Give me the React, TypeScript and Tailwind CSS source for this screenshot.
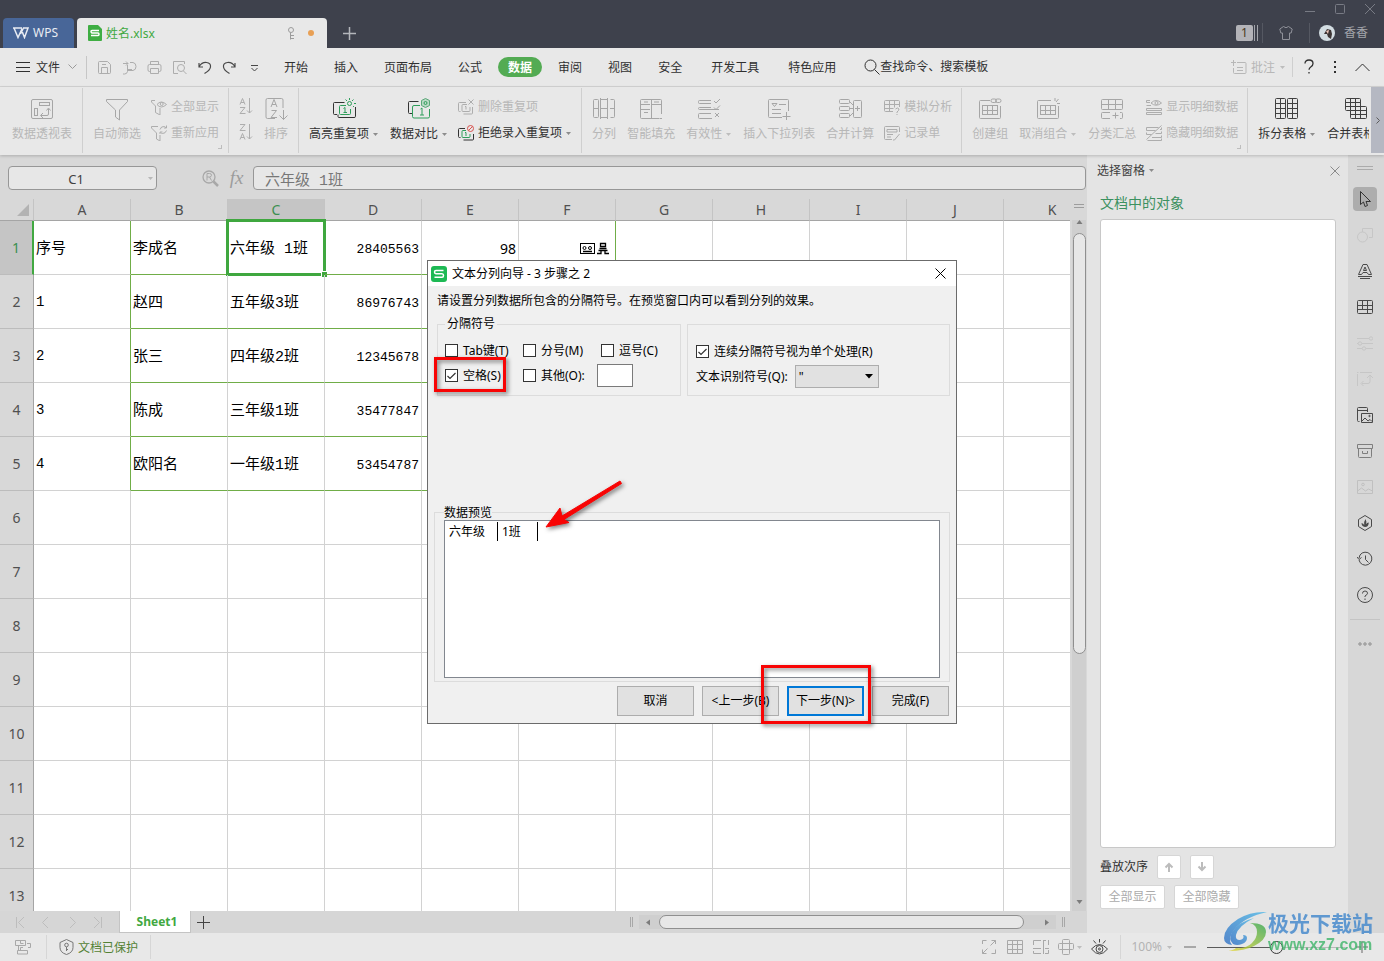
import type { ReactNode } from "react";

type IconProps = { w?: number; h?: number; className?: string; children: ReactNode };

function Icon({ w = 16, h = 16, className = "", children }: IconProps) {
  return (
    <svg
      width={w}
      height={h}
      viewBox={`0 0 ${w} ${h}`}
      fill="none"
      stroke="currentColor"
      strokeWidth="1"
      className={`shrink-0 ${className}`}
      aria-hidden="true"
    >
      {children}
    </svg>
  );
}

function Caret({ className = "text-[#8c8c8c]" }: { className?: string }) {
  return (
    <Icon w={7} h={5} className={className}>
      <path d="M1 1h5L3.500 4z" fill="currentColor" stroke="none" />
    </Icon>
  );
}

const GREEN = "#2f9e5b";

const big: Record<string, ReactNode> = {
  pivot: (
    <>
      <rect x="1.500" y="2.500" width="21" height="19" rx="1.500" />
      <rect x="9.500" y="5.500" width="10" height="3" />
      <rect x="4.500" y="11.500" width="3" height="7" />
      <path d="M11 18.500h6q1.500 0 1.500-1.500v-5M13 16l-2.500 2.500L13 21M16.500 13.500l2-2.500 2 2.500" />
    </>
  ),
  filter: <path d="M1.500 2.500h21v2l-8 8.500v10l-4-3V13l-9-8.500z" />,
  sort: (
    <>
      <path d="M11 21.500H3.500q-1.500 0-1.500-1.500V3q0-1.500 1.500-1.500h14q1.500 0 1.500 1.500v8M19.500 13v9.500M15.500 18.500l4 4 4-4" />
      <path d="M7 10l3-7.500L13 10M8 7.500h4M7.500 13.500h5l-5.500 7h6" />
    </>
  ),
  highlight: (
    <>
      <path d="M5 17.500H2.500q-1 0-1-1v-10q0-1 1-1h10M23.500 10v9.500q0 1-1.500 1H7q-1 0-1-1v-2" stroke="#333" />
      <path d="M14 8.500H8.500q-1 0-1 1v7q0 1 1 1h9q1 0 1-1V12" stroke={GREEN} />
      <path d="M11.500 11.500l1.500-1v5.500M11.500 15.500h3.500M17.500 1v2M13.500 2.500l1.500 1.500M21.500 2.500L20 4M22 6.500h2M21 9l1 1" stroke={GREEN} />
      <circle cx="17.500" cy="6.500" r="2" stroke={GREEN} />
    </>
  ),
  compare: (
    <>
      <path d="M5 16.500H2.500q-1 0-1-1v-10q0-1 1-1h9" stroke="#333" />
      <path d="M13 8.500H7q-1.500 0-1.500 1.500v9.500q0 1.500 1.500 1.500h14q1.500 0 1.500-1.500V12M13.500 12l1.500-1v7M13 18h4" stroke={GREEN} />
      <path d="M18.500 1.500l4 2v5l-4 2-4-2v-5z" stroke="#5aa878" fill="#b9d8c4" />
      <circle cx="18.500" cy="6" r="1.500" stroke={GREEN} />
    </>
  ),
  split: (
    <>
      <path d="M5.500 2.500h-3q-1 0-1 1v16q0 1 1 1h3q1 0 1-1v-16q0-1-1-1M18.500 2.500h3q1 0 1 1v16q0 1-1 1h-3M9 2.500h6M9 20.500h6M8.500 1v21M15.500 1v21M1 11.500h5M9 11.500h6M18 11.500h5" />
    </>
  ),
  fill: (
    <>
      <path d="M22.500 17V3.500q0-1-1-1h-19q-1 0-1 1v17q0 1 1 1h18M12.500 2v19M2 7.500h9M2 12.500h9M12.500 7.500h10M5 5h4M5 15.500h4M15 5h5M21 21.500h2" />
    </>
  ),
  valid: (
    <>
      <path d="M14 3.500H2.500q-1 0-1 1v1q0 1 1 1H14M14 10.500H2.500q-1 0-1 1q0 1 1 1H22M14 16.500H2.500q-1 0-1 1v3q0 1 1 1H15M17 4l2 2 4-4M17 10.500l2 2 4-4M18 16l4 4M22 16l-4 4" />
    </>
  ),
  dropdown: (
    <>
      <path d="M15 20.500H2.500q-1 0-1-1v-16q0-1 1-1h18q1 0 1 1v10.500M5 6.500h5l-2.500 3zM12 7.500h7M5 12.500h9M5 16.500h9M19.500 15v8M15.500 19.500h8" />
    </>
  ),
  merge: (
    <>
      <rect x="1.500" y="2.500" width="10" height="4" rx="1" />
      <rect x="1.500" y="9.500" width="10" height="4" rx="1" />
      <rect x="1.500" y="16.500" width="10" height="4" rx="1" />
      <rect x="15.500" y="3.500" width="8" height="17" rx="1" />
      <path d="M12 5l3 3M12 11.500h3M12 19l3-3M17 11.500h5M19.500 9v5" />
    </>
  ),
  group: (
    <>
      <path d="M12 3.500H2.500q-1 0-1 1v16q0 1 1 1h19q1 0 1-1V9" />
      <rect x="4.500" y="8.500" width="15" height="9" />
      <path d="M5 13.500h15M9.500 9v9M14.500 9v9" />
      <rect x="13" y="2" width="5.500" height="3.500" rx="1.700" />
      <rect x="17.500" y="2" width="5.500" height="3.500" rx="1.700" />
    </>
  ),
  ungroup: (
    <>
      <path d="M15 3.500H2.500q-1 0-1 1v16q0 1 1 1h19q1 0 1-1V9M19 1v3M22.500 2L20 5M24 6.500h-3" />
      <rect x="4.500" y="8.500" width="15" height="9" />
      <path d="M5 13.500h15M9.500 9v9M14.500 9v9" />
    </>
  ),
  subtotal: (
    <>
      <rect x="1.500" y="2.500" width="21" height="10" rx="1" />
      <path d="M1.500 7.500h21M8.500 2.500v10M15.500 2.500v10M10 15.500H2.500q-1 0-1 1v4q0 1 1 1H10M20 15.500h1.500q1 0 1 1v4q0 1-1 1H20M12.500 18.500h6M15.500 15.500v6" />
    </>
  ),
  splitTable: (
    <>
      <rect x="0.500" y="1.500" width="10" height="20" rx="1" />
      <rect x="12.500" y="1.500" width="10" height="20" rx="1" />
      <path d="M5.500 1.500v20M.5 6.500h10M.5 11.500h10M.5 16.500h10M17.500 1.500v20M12.500 6.500h10M12.500 11.500h10M12.500 16.500h10" />
    </>
  ),
  mergeTable: (
    <>
      <path d="M2.500 1.500h13q1 0 1 1v7h5q1 0 1 1v10q0 1-1 1h-14q-1 0-1-1v-7h-4q-1 0-1-1v-10q0-1 1-1zM6.500 1.500v12M11.500 1.500v20M16.500 9v12M1.500 5.500h15M1.500 9.500h15M6.500 13.500h16M6.500 17.500h16" />
    </>
  ),
};

const small: Record<string, ReactNode> = {
  showAll: (
    <>
      <path d="M4 1.500H.5v1.500l4 4v6.500L9 16V9M6 5.500q4-5 9.500 0-5.500 5-9.500 0z" />
      <circle cx="10.700" cy="5" r="1.500" />
    </>
  ),
  reapply: (
    <path d="M7 1.500H.5v1.500l5 5v6l3.500 2V10M9 4.500q1-3.500 4.500-3 1 .3 1.500 1.500M15.500 5.500q-1 3-4 3-1 0-2-1M15.500.5V3H13M9 9V7h2.500" />
  ),
  dedupe: (
    <path d="M2.500 12.500h-1q-1 0-1-1v-7q0-1 1-1H8M14.500 8v6q0 1-1 1h-8M9 5.500H5q-1 0-1 1v5q0 1 1 1h6q1 0 1-1V8M7 7.500h1v3M10.500.5l5 5M15.500.5l-5 5" />
  ),
  reject: (
    <>
      <path d="M2.500 12.500h-1q-1 0-1-1v-7q0-1 1-1H7M15.500 9v5q0 1-1 1h-9" stroke="#333" />
      <path d="M8 5.500H5q-1 0-1 1v5q0 1 1 1h6q1 0 1-1V9M7 7.500h1v3.500" stroke={GREEN} />
      <circle cx="12.500" cy="3.500" r="3" stroke="#d9534f" />
      <path d="M10.500 5.500l4-4" stroke="#d9534f" />
    </>
  ),
  whatif: (
    <path d="M9 12.500H1.500q-1 0-1-1v-9q0-1 1-1h13q1 0 1 1V8M.5 5.500h15M.5 9.500h9M5.500 1.500v11M10.500 1.500v7M11.500 10q2-2 3.500 0 0 1.500-2 3v1M13 15v1" />
  ),
  form: (
    <path d="M8 14.500H1.500q-1 0-1-1v-11q0-1 1-1h13q1 0 1 1V7M3 4.500h10v2.500H3zM3 9.500h6M3 12h4M15.500 9l-5 6H9" />
  ),
  showDetail: (
    <>
      <path d="M4 1.500H.5v2H4M5 6.500H.5M.5 9.500h15v2H.5zM.5 13.500h15v2H.5zM5 4q5-5 10.500 0-5.500 4.500-10.500 0z" />
      <circle cx="10.500" cy="4" r="1.500" />
    </>
  ),
  hideDetail: (
    <path d="M.5 2.500h12M.5 2.500v3h9M.5 9.500h5M.5 7.500v2M15.500.5l-15 14M14 4.500h1.500v-2M9.500 8.500h6v-2M6 12.500h9.500v-2M1.500 15.500h14v-2" />
  ),
};

function BigTool({ icon, label, caret, active }: { icon: string; label: string; caret?: boolean; active?: boolean }) {
  return (
    <button
      type="button"
      className={`flex shrink-0 flex-col items-center gap-[5px] pt-[9px] ${active ? "text-[#303030]" : "text-[#b7b7b7]"}`}
    >
      <Icon w={24} h={24} className={active ? "text-[#404040]" : "text-[#a6a6a6]"}>
        {big[icon]}
      </Icon>
      <span className="flex items-center gap-[3px] leading-4 whitespace-nowrap">
        {label}
        {caret && <Caret className={active ? "text-[#8c8c8c]" : "text-[#bdbdbd]"} />}
      </span>
    </button>
  );
}

function SmallTool({ icon, label, caret, active }: { icon: string; label: string; caret?: boolean; active?: boolean }) {
  return (
    <button
      type="button"
      className={`flex h-4 items-center gap-1 leading-4 whitespace-nowrap ${active ? "text-[#303030]" : "text-[#b7b7b7]"}`}
    >
      <Icon className={active ? "" : "text-[#adadad]"}>{small[icon]}</Icon>
      <span className="flex items-center gap-[3px]">
        {label}
        {caret && <Caret />}
      </span>
    </button>
  );
}

function Stack({ children }: { children: ReactNode }) {
  return <div className="-ml-px flex shrink-0 flex-col gap-[10px] pt-[11px]">{children}</div>;
}

function Group({ children, corner, tight }: { children: ReactNode; corner?: boolean; tight?: boolean }) {
  return (
    <div className={`relative flex shrink-0 gap-[11px] border-r border-[#cfcfcf] pl-[10px] ${tight ? "pr-[9px]" : "pr-[10px]"}`}>
      {children}
      {corner && <span className="absolute right-1.5 bottom-1 h-1 w-1 border-r border-b border-[#bdbdbd]" />}
    </div>
  );
}

function TitleBar() {
  return (
    <header className="flex h-12 shrink-0 justify-between bg-[#3e414c] text-[12px]">
      <div className="flex items-end pl-[3px]">
        <button type="button" className="mr-[3px] flex h-[30px] w-[71px] items-center gap-1 rounded-t-[4px] bg-[#486698] pl-[10px] text-[#e8ecf3]">
          <Icon w={16} h={12}>
            <path d="M0 1h9M1 1l4 9.500L8.500 3l3 7.500L15 1h-4.500l-3 6" strokeWidth="1.500" />
          </Icon>
          WPS
        </button>
        <div className="flex h-[30px] w-[250px] items-center rounded-t-[4px] bg-[#e8e8e8] pr-[13px] pl-[11px]">
          <svg width="14" height="16" viewBox="0 0 14 16" aria-hidden="true">
            <path d="M1 0h9l4 4v11q0 1-1 1H1q-1 0-1-1V1q0-1 1-1z" fill="#3fae43" />
            <path d="M11 5.500H4q-1 0-1 1T4 8h6q1 0 1 1.200t-1 1.300H3" fill="none" stroke="#fff" strokeWidth="1.500" />
          </svg>
          <span className="ml-1 flex-1 pt-0.5 text-[#41a841]">姓名.xlsx</span>
          <Icon w={8} h={13} className="mr-[13px] text-[#9c9c9c]">
            <circle cx="4" cy="3" r="2.500" />
            <path d="M3.500 5.500v7M4 8.500h3M4 11.500h3" />
          </Icon>
          <span className="h-1.5 w-1.5 rounded-full bg-[#e8a055]" />
        </div>
        <button type="button" aria-label="新建标签" className="mb-[8px] ml-[16px] text-[#b4b6bb]">
          <Icon w={13} h={13}>
            <path d="M6.500 0v13M0 6.500h13" strokeWidth="1.500" />
          </Icon>
        </button>
      </div>
      <div className="flex flex-col items-end">
        <div className="flex h-[18px] items-center gap-5 pr-[9px] text-[#787b84]">
          <button type="button" aria-label="最小化">
            <Icon w={10} h={10}>
              <path d="M0 7.500h10" />
            </Icon>
          </button>
          <button type="button" aria-label="最大化">
            <Icon w={10} h={10}>
              <rect x="0.500" y="0.500" width="9" height="9" rx="1" />
            </Icon>
          </button>
          <button type="button" aria-label="关闭">
            <Icon w={10} h={10}>
              <path d="M0 0l10 10M10 0L0 10" />
            </Icon>
          </button>
        </div>
        <div className="flex h-[30px] items-center pr-4 text-[#a3a5ab]">
          <span className="flex h-4 w-[17px] items-center justify-center rounded-[2px] bg-[#b3b3b8] text-[#4b3a20]">1</span>
          <span className="ml-px h-4 w-1 border-x border-[#a3a5ab]" />
          <span className="ml-1 h-5 w-px bg-[#555862]" />
          <Icon w={14} h={14} className="mx-4 text-[#8f9199]">
            <path d="M4.500.5L.8 3l1 4H3.500v6.500h7V7h1.700l1-4L9.500.5q-2.500 2.500-5 0z" />
          </Icon>
          <span className="h-5 w-px bg-[#555862]" />
          <svg width="16" height="16" viewBox="0 0 16 16" className="mx-[9px]" aria-hidden="true">
            <circle cx="8" cy="8" r="8" fill="#d3dde2" />
            <path d="M5 9l3-5 4 1 1 4-1 5-3-2-1-3z" fill="#3c3535" />
            <path d="M7 6l3-1-1 4z" fill="#eec9bd" />
          </svg>
          <span>香香</span>
        </div>
      </div>
    </header>
  );
}

const quick: { label: string; dark?: boolean; d: ReactNode }[] = [
  { label: "保存", d: <path d="M2.500 1.500h8l3 3v8q0 1-1 1h-10q-1 0-1-1v-10q0-1 1-1zM4.500 13V7.500h6V13M5 4.500h4" /> },
  { label: "输出", d: <path d="M1 3.500h5M4 1.500l2 2-2 2M8 2.500h3q3 .5 3 4t-3 4H5.500M5.500 5v6.500q-.5 2.500-3 2.500H1M5 9.500h5" /> },
  { label: "打印", d: <path d="M3.500 4.500v-3h8v3M3.500 11.500h-1q-1.500 0-1.500-1.500V6q0-1.500 1.500-1.500h10Q14 4.500 14 6v4q0 1.500-1.500 1.500h-1M3.500 8.500h8v5h-8z" /> },
  { label: "预览", d: <><path d="M6 13.500H1.500v-12h11V4M11.500 11l3 3" /><circle cx="9" cy="8" r="3.500" /></> },
  { label: "撤销", dark: true, d: <path d="M2 3v4h4M2.200 6.500Q5 2 9.500 2.500t4 4.500q-.5 3.500-6 6.500" strokeWidth="1.200" /> },
  { label: "恢复", dark: true, d: <path d="M13 3v4H9M12.800 6.500Q10 2 5.500 2.500t-4 4.500q.5 3.500 6 6.500" strokeWidth="1.200" /> },
  { label: "更多", dark: true, d: <path d="M4 5.500h7M4.500 8l3 3 3-3" /> },
];

const tabs = [
  ["开始", ""],
  ["插入", ""],
  ["页面布局", ""],
  ["公式", ""],
  ["数据", "active"],
  ["审阅", ""],
  ["视图", ""],
  ["安全", ""],
  ["开发工具", "wide"],
  ["特色应用", "wide"],
];

function MenuBar() {
  return (
    <nav className="flex h-[39px] shrink-0 items-center border-b border-[#d4d4d4] bg-[#e8e8e8] text-[12px] whitespace-nowrap text-[#303030]">
      <button type="button" className="flex items-center pl-4">
        <Icon w={14} h={11}>
          <path d="M0 .5h14M0 5.500h14M0 9.500h14" />
        </Icon>
        <span className="mr-2 ml-1.5 pt-px">文件</span>
        <Icon w={9} h={6} className="text-[#9a9a9a]">
          <path d="M.5.5l4 4 4-4" />
        </Icon>
      </button>
      <div className="ml-[9px] flex items-center gap-[10px] border-l border-[#c6c6c6] py-1 pl-[10px]">
        {quick.map((q) => (
          <button key={q.label} type="button" aria-label={q.label} className={q.dark ? "text-[#484848]" : "text-[#adadad]"}>
            <Icon w={15} h={15}>{q.d}</Icon>
          </button>
        ))}
      </div>
      <div className="ml-3 flex items-center gap-1.5">
        {tabs.map(([name, kind]) => (
          <button
            key={name}
            type="button"
            className={
              kind === "active"
                ? "h-5 rounded-full bg-[#53ab53] px-[10px] pt-px font-bold text-white"
                : kind === "wide"
                  ? "ml-[3px] h-5 px-[10px] pt-px"
                  : "h-5 px-[10px] pt-px"
            }
          >
            {name}
          </button>
        ))}
      </div>
      <button type="button" className="ml-[18px] flex items-center">
        <Icon w={16} h={16}>
          <circle cx="6.500" cy="6.500" r="5.500" />
          <path d="M10.500 10.500l5 5" />
        </Icon>
        查找命令、搜索模板
      </button>
      <div className="ml-auto flex items-center pr-[14px]">
        <button type="button" className="flex items-center gap-1 text-[#b7b7b7]">
          <Icon w={16} h={15}>
            <path d="M6 2.500h8q1 0 1 1v9q0 1-1 1H3.500q-1 0-1-1V8M2.500 0v6M0 2.500h5M6 7.500h6M6 10.500h6" />
          </Icon>
          <span className="pt-px">批注</span>
          <Caret className="text-[#bdbdbd]" />
        </button>
        <span className="mx-[6px] h-5 w-px bg-[#cfcfcf]" />
        <button type="button" aria-label="帮助" className="w-5">
          <Icon w={20} h={16}>
            <path d="M6 4.500q0-3.500 4-3.500t4 3.500q0 2-2 3.300t-2 3M10 13v1.500" strokeWidth="1.300" />
          </Icon>
        </button>
        <button type="button" aria-label="更多选项" className="mr-4 ml-3 w-2">
          <Icon w={8} h={14}>
            <path d="M4 1v2M4 6v2M4 11v2" strokeWidth="2" />
          </Icon>
        </button>
        <button type="button" aria-label="收起功能区">
          <Icon w={15} h={9}>
            <path d="M.5 8l7-7 7 7" />
          </Icon>
        </button>
      </div>
    </nav>
  );
}

function Ribbon() {
  return (
    <section className="z-10 flex h-[68px] shrink-0 bg-[#e8e8e8] text-[12px] shadow-[0_1px_3px_rgba(0,0,0,0.2)]" aria-label="数据">
      <div className="flex min-w-0 flex-1 overflow-hidden pt-px pb-0.5 pl-0.5">
        <Group>
          <BigTool icon="pivot" label="数据透视表" />
        </Group>
        <Group corner tight>
          <BigTool icon="filter" label="自动筛选" />
          <Stack>
            <SmallTool icon="showAll" label="全部显示" />
            <SmallTool icon="reapply" label="重新应用" />
          </Stack>
        </Group>
        <Group>
          <div className="flex flex-col gap-[10px] pt-[10px] text-[#adadad]">
            <button type="button" aria-label="升序">
              <Icon w={14} h={16}>
                <path d="M1 6.500L3.500.5 6 6.500M2 4.500h3M1 9.500h5L1 15.500h5.500M10.500 0v15M8 12.500l2.500 2.500 2.500-2.500" />
              </Icon>
            </button>
            <button type="button" aria-label="降序">
              <Icon w={14} h={16}>
                <path d="M1 .5h5L1 6.500h5.500M1 15.500l2.500-6 2.500 6M2 13.500h3M10.500 0v15M8 12.500l2.500 2.500 2.500-2.500" />
              </Icon>
            </button>
          </div>
          <BigTool icon="sort" label="排序" />
        </Group>
        <Group tight>
          <BigTool icon="highlight" label="高亮重复项" caret active />
          <BigTool icon="compare" label="数据对比" caret active />
          <Stack>
            <SmallTool icon="dedupe" label="删除重复项" />
            <SmallTool icon="reject" label="拒绝录入重复项" caret active />
          </Stack>
        </Group>
        <Group tight>
          <BigTool icon="split" label="分列" />
          <BigTool icon="fill" label="智能填充" />
          <BigTool icon="valid" label="有效性" caret />
          <BigTool icon="dropdown" label="插入下拉列表" />
          <BigTool icon="merge" label="合并计算" />
          <Stack>
            <SmallTool icon="whatif" label="模拟分析" />
            <SmallTool icon="form" label="记录单" />
          </Stack>
        </Group>
        <Group corner tight>
          <BigTool icon="group" label="创建组" />
          <BigTool icon="ungroup" label="取消组合" caret />
          <BigTool icon="subtotal" label="分类汇总" />
          <Stack>
            <SmallTool icon="showDetail" label="显示明细数据" />
            <SmallTool icon="hideDetail" label="隐藏明细数据" />
          </Stack>
        </Group>
        <Group>
          <BigTool icon="splitTable" label="拆分表格" caret active />
          <BigTool icon="mergeTable" label="合并表格" caret active />
        </Group>
      </div>
      <button type="button" aria-label="向右滚动" className="mb-0.5 ml-0.5 flex w-[13px] items-center justify-center bg-[#b5b8c2] text-[#5c5c5c]">
        <Icon w={4} h={7}>
          <path d="M.5.5l3 3-3 3" />
        </Icon>
      </button>
    </section>
  );
}

const SHEET_TEXT = "font-['Liberation_Mono','Noto_Sans_CJK_SC',monospace]";

function FormulaBar() {
  return (
    <div className="flex h-11 shrink-0 items-center pt-0.5 pr-px pl-2">
      <div className="flex h-6 w-[149px] items-center rounded-[4px] border border-[#979797] bg-[#e7e7e7] pr-0.5">
        <input aria-label="名称框" defaultValue="C1" className="h-5 min-w-0 flex-1 bg-transparent pt-0.5 pr-1 text-center text-[13px] text-[#404040] outline-none" />
        <Caret className="text-[#b8b8b8]" />
      </div>
      <Icon w={17} h={17} className="ml-[45px] text-[#a8a8a8]">
        <circle cx="7" cy="7" r="6" strokeWidth="1.300" />
        <path d="M5 10.500v-7h2.500q2 0 2 1.700T7.500 7H5M7.500 7l2 3.500" />
        <path d="M11.500 11.500l4.500 4.500" strokeWidth="2.500" />
      </Icon>
      <span className="mr-2 ml-[9px] w-[17px] text-center font-['Liberation_Serif',serif] text-[19px] leading-6 text-[#9c9c9c] italic">fx</span>
      <input
        aria-label="编辑栏"
        defaultValue="六年级 1班"
        className={`h-6 min-w-0 flex-1 rounded-[4px] border border-[#979797] bg-[#e7e7e7] px-[11px] pt-0.5 text-[15px] text-[#777] outline-none ${SHEET_TEXT}`}
      />
    </div>
  );
}

const columns = ["A", "B", "C", "D", "E", "F", "G", "H", "I", "J", "K"];
const data: string[][] = [
  ["序号", "李成名", "六年级 1班", "28405563", "98"],
  ["1", "赵四", "五年级3班", "86976743", ""],
  ["2", "张三", "四年级2班", "12345678", ""],
  ["3", "陈成", "三年级1班", "35477847", ""],
  ["4", "欧阳名", "一年级1班", "53454787", ""],
];
const rows = Array.from({ length: 13 }, (_, i) => i);

function cellBorder(r: number, c: number) {
  const inside = r < 5;
  const right = inside && (c === 0 || c === 5) ? "border-r-[#70ad47]" : "border-r-[#d2d2d2]";
  const bottom = inside && c >= 1 && c <= 5 ? "border-b-[#70ad47]" : "border-b-[#d2d2d2]";
  return `${right} ${bottom}`;
}

function cellFace(r: number, c: number) {
  if (c === 3) return `pt-1 text-right text-[13px] ${SHEET_TEXT}`;
  if (c === 4) return "pt-0.5 text-right text-[14px]";
  if (c === 0 && r > 0) return `pt-0.5 text-left text-[14px] ${SHEET_TEXT}`;
  return `pt-1.5 text-left text-[15px] ${SHEET_TEXT}`;
}

function Sheet() {
  return (
    <div className="flex min-h-0 flex-1">
      <div className="min-w-0 flex-1 overflow-hidden bg-white">
        <table className="w-[1101px] table-fixed border-separate border-spacing-0">
          <colgroup>
            <col className="w-[34px]" />
            {columns.map((c) => (
              <col key={c} className="w-[97px]" />
            ))}
          </colgroup>
          <thead>
            <tr>
              <th aria-label="全选" className="h-[22px] border-r border-b border-r-[#c4c4c4] border-b-[#a5a5a5] bg-[#d8d8d8] p-0">
                <Icon w={12} h={12} className="ml-auto mr-1 text-[#b3b3b3]">
                  <path d="M12 0v12H0z" fill="currentColor" stroke="none" />
                </Icon>
              </th>
              {columns.map((c) => (
                <th
                  key={c}
                  className={`h-[22px] border-r border-b border-r-[#c4c4c4] border-b-[#a5a5a5] p-0 text-[14px] leading-5 font-normal ${
                    c === "C" ? "bg-[#c5c5c5] text-[#3b8f50]" : "bg-[#d8d8d8] text-[#505050]"
                  }`}
                >
                  {c}
                </th>
              ))}
            </tr>
          </thead>
          <tbody>
            {rows.map((r) => (
              <tr key={r}>
                <th
                  className={`h-[54px] border-b border-b-[#bcbcbc] p-0 text-[14px] font-normal ${
                    r === 0 ? "border-r-2 border-r-[#41a841] bg-[#c5c5c5] text-[#3b8f50]" : "border-r border-r-[#a5a5a5] bg-[#d8d8d8] text-[#505050]"
                  }`}
                >
                  {r + 1}
                </th>
                {columns.map((name, c) => (
                  <td key={name} className={`relative h-[54px] border-r border-b px-0.5 pb-0 whitespace-pre text-black ${cellFace(r, c)} ${cellBorder(r, c)}`}>
                    {data[r]?.[c] ?? ""}
                    {r === 0 && c === 5 && (
                      <Icon w={30} h={13} className="mr-[3px] -mt-1 ml-auto">
                        <rect x="0.500" y="1.500" width="14" height="10" />
                        <circle cx="4.500" cy="6" r="1.500" />
                        <circle cx="10" cy="6" r="1.500" />
                        <path d="M3 9.500h9M20.500 1.500h5v3h-5zM19.500 6.500h7M18.500 8.500h9M17 11.500h4v-3h4v3h4" strokeWidth="1.300" />
                      </Icon>
                    )}
                    {r === 0 && c === 2 && (
                      <>
                        <span className="absolute -top-0.5 -right-0.5 -bottom-0.5 -left-0.5 border-[3px] border-[#3fa73f]" />
                        <span className="absolute -right-1 -bottom-1 h-[7px] w-[7px] border border-white bg-[#3fa73f]" />
                      </>
                    )}
                  </td>
                ))}
              </tr>
            ))}
          </tbody>
        </table>
      </div>
      <div className="flex w-[17px] shrink-0 flex-col pr-px pl-[2px]">
        <span className="mx-[2px] mt-[5px] mb-[12px] h-[4px] shrink-0 border-y border-[#9d9d9d]" />
        <div className="flex min-h-0 flex-1 flex-col items-center bg-[#cfcfcf] text-[#7c7c7c]">
          <Icon w={7} h={13}>
            <path d="M.5 4L3.500 0l3 4z" fill="currentColor" stroke="none" />
          </Icon>
          <div className="h-[421px] w-[13px] rounded-full border border-[#8f8f8f] bg-[#e7e7e7]" />
          <Icon w={7} h={12} className="mt-auto">
            <path d="M.5 1L3.500 5l3-4z" fill="currentColor" stroke="none" />
          </Icon>
        </div>
      </div>
    </div>
  );
}

function SheetBar() {
  return (
    <div className="flex h-[22px] shrink-0 items-center bg-[#d6d6d6]">
      <div className="flex w-[119px] items-center gap-4 pl-[15px] text-[#bdbdbd]">
        {["M1.500 0v11M9 0L3.500 5.500 9 11", "M7 0L1.500 5.500 7 11", "M3 0l5.500 5.500L3 11", "M1 0l5.500 5.500L1 11M8.500 0v11"].map((d, i) => (
          <button key={d} type="button" aria-label={["第一个", "上一个", "下一个", "最后一个"][i]}>
            <Icon w={10} h={11}>
              <path d={d} />
            </Icon>
          </button>
        ))}
      </div>
      <button type="button" className="h-[22px] w-[72px] border-x border-b border-[#c4c4c4] bg-white pt-px pl-1 text-[12px] font-bold text-[#41a841]">
        Sheet1
      </button>
      <button type="button" aria-label="新建工作表" className="ml-1.5 text-[#444]">
        <Icon w={13} h={13}>
          <path d="M6.500 0v13M0 6.500h13" />
        </Icon>
      </button>
      <div className="mr-[22px] ml-auto flex w-[435px] items-center gap-1.5">
        <span className="h-[10px] w-[3px] border-x border-[#a8a8a8]" />
        <div className="flex h-[14px] w-[417px] items-center bg-[#cfcfcf] text-[#7c7c7c]">
          <Icon w={20} h={7}>
            <path d="M11 .5v6l-4-3z" fill="currentColor" stroke="none" />
          </Icon>
          <div className="h-[14px] w-[365px] rounded-full border border-[#8f8f8f] bg-[#e7e7e7]" />
          <Icon w={30} h={7}>
            <path d="M21 .5v6l4-3z" fill="currentColor" stroke="none" />
          </Icon>
        </div>
        <span className="h-[10px] w-[3px] border-x border-[#a8a8a8]" />
      </div>
    </div>
  );
}

function SelectionPane() {
  return (
    <aside className="flex w-[261px] shrink-0 flex-col bg-[#e4e4e4] pr-3 pb-6 pl-[13px] text-[12px] leading-4">
      <div className="-ml-[3px] flex h-[31px] items-center justify-between">
        <button type="button" className="flex items-center gap-[3px] text-[#404040]">
          选择窗格
          <Caret />
        </button>
        <button type="button" aria-label="关闭窗格" className="-mr-1 text-[#8a8a8a]">
          <Icon w={10} h={10}>
            <path d="M.5.500l9 9M9.500.500l-9 9" />
          </Icon>
        </button>
      </div>
      <h2 className="flex h-[33px] items-center pt-px text-[14px] leading-5 text-[#3c9160]">文档中的对象</h2>
      <div className="min-h-0 flex-1 rounded-[3px] border border-[#c8c8c8] bg-white" />
      <div className="mt-[7px] flex items-center text-[#303030]">
        叠放次序
        <button type="button" aria-label="上移" className="ml-[9px] flex h-6 w-6 items-center justify-center rounded-[2px] border border-[#d6d6d6] bg-white text-[#bcbcbc]">
          <Icon w={10} h={10}>
            <path d="M5 10V2M1.500 5.500L5 2l3.500 3.500" strokeWidth="2" />
          </Icon>
        </button>
        <button type="button" aria-label="下移" className="ml-[9px] flex h-6 w-6 items-center justify-center rounded-[2px] border border-[#d6d6d6] bg-white text-[#bcbcbc]">
          <Icon w={10} h={10}>
            <path d="M5 0v8M1.500 4.500L5 8l3.500-3.500" strokeWidth="2" />
          </Icon>
        </button>
      </div>
      <div className="mt-1.5 flex gap-[9px] text-[#ababab]">
        <button type="button" className="h-6 w-[65px] rounded-[2px] border border-[#d6d6d6] bg-white">全部显示</button>
        <button type="button" className="h-6 w-[65px] rounded-[2px] border border-[#d6d6d6] bg-white">全部隐藏</button>
      </div>
    </aside>
  );
}

const rail: { label: string; tone: string; d: ReactNode }[] = [
  { label: "选择", tone: "bg-[#adadad] text-[#333]", d: <path d="M3.500.5v13l3-2.500 1.500 4.500 2.500-1L9 10.500h4.500z" /> },
  { label: "形状", tone: "text-[#c6c6c6]", d: <><path d="M5.500 5V1.500h10v9H12" /><circle cx="5.500" cy="10" r="5" /></> },
  { label: "艺术字", tone: "text-[#4a4a4a]", d: <path d="M1.500 11.500L6 1.500h4l4.500 10h-3L10 9.500H6l-1.500 2zM6.500 7.500h3L8 4zM1 13.500h14M3 15.500h10" /> },
  { label: "表格", tone: "text-[#4a4a4a]", d: <path d="M1.500 1.500h13q1 0 1 1v11q0 1-1 1h-13q-1 0-1-1v-11q0-1 1-1zM.5 6.500h15M.5 10.500h15M5.500 1.500v9M10.500 1.500v13" /> },
  { label: "属性", tone: "text-[#c6c6c6]", d: <><path d="M0 3.500h12M0 8.500h1M5 8.500h11M0 13.500h5M9 13.500h7" /><circle cx="14" cy="3.500" r="1.700" /><circle cx="3" cy="8.500" r="1.700" /><circle cx="7" cy="13.500" r="1.700" /></> },
  { label: "透视表", tone: "text-[#c6c6c6]", d: <path d="M.5 3v12M3 1.500h12M0 1.500h1.500M5 12.500h6q2 0 2-2V5M6.500 10L4 12.500 6.500 15M10 7l3-3 3 3" /> },
  { label: "图片库", tone: "text-[#4a4a4a]", d: <><path d="M2.500 14.500h-1q-1 0-1-1v-12q0-1 1-1h8q1 0 1 1V5M.5 3.500h10M4.500 6.500h11v9h-11zM5 14l3-3 3 3 2-1.500 2 2" /><circle cx="12.500" cy="9" r=".7" /></> },
  { label: "归档", tone: "text-[#7e7e7e]", d: <path d="M.5 1.500h15v4H.5zM1.500 5.500v8q0 1 1 1h11q1 0 1-1v-8M5.500 8v2.500h5V8" /> },
  { label: "图片", tone: "text-[#c0c0c0]", d: <><path d="M.5 1.500h15v13H.5zM.5 12l4-3 4 3 3-2 4 2" /><circle cx="6" cy="5.500" r="1.300" /></> },
  { label: "稻壳", tone: "text-[#4a4a4a]", d: <><path d="M8 .5l6.500 4v7L8 15.500l-6.500-4v-7z" /><path d="M8 12q-3.500-.5-3.500-4 2 .5 2.700 2Q6.500 7 8.500 4q1.500 2.500.3 5.200 1-1.500 3-1.700Q11.500 12 8 12z" fill="currentColor" stroke="none" /></> },
  { label: "历史", tone: "text-[#4a4a4a]", d: <path d="M2 9a6.500 6.500 0 1 0 1-5L2 7M0 6l2 2.500L4.500 6.500M8.500 4.500v4l3 3" /> },
  { label: "帮助", tone: "text-[#4a4a4a]", d: <><circle cx="8" cy="8" r="7.500" /><path d="M5.500 6.500q0-2.500 2.500-2.500t2.500 2.200Q10.500 7.500 9 8.200t-1 1.800M8 11.500V13" /></> },
];

function SideRail() {
  return (
    <aside className="flex w-9 shrink-0 flex-col items-center bg-[#d7d7d7] pt-[11px] pr-0.5">
      <span className="mb-[17px] h-1 w-4 shrink-0 border-y border-[#ababab]" />
      <div className="flex flex-col gap-3">
        {rail.map((r) => (
          <button key={r.label} type="button" aria-label={r.label} className={`flex h-6 w-6 items-center justify-center rounded-[4px] ${r.tone}`}>
            <Icon>{r.d}</Icon>
          </button>
        ))}
      </div>
      <span className="mt-3 h-px w-[30px] shrink-0 bg-[#c4c4c4]" />
      <button type="button" aria-label="更多" className="mt-[22px] text-[#8a8a8a]">
        <Icon w={14} h={4}>
          <circle cx="2" cy="2" r="1.200" />
          <circle cx="7" cy="2" r="1.200" />
          <circle cx="12" cy="2" r="1.200" />
        </Icon>
      </button>
    </aside>
  );
}

function StatusBar() {
  return (
    <footer className="flex h-7 shrink-0 items-center bg-[#e8e8e8] pl-[15px] text-[12px] text-[#a8a8a8]">
      <Icon w={17} h={16}>
        <path d="M.5 1.500h10v5H.5zM5.500 1.500v3h3M12 4.500h3.500v4H13M3.500 6.500v5M2.500 11.500h10v3.500h-10zM8 8.500H5.500v3" />
      </Icon>
      <span className="ml-[14px] h-6 w-px bg-[#d6d6d6]" />
      <button type="button" className="flex items-center gap-1 pl-3 text-[#548235]">
        <Icon w={15} h={16} className="text-[#777]">
          <path d="M7.500.5l6.500 3v5q0 5-6.500 7-6.500-2-6.500-7v-5z" />
          <circle cx="7.500" cy="6" r="1.800" />
          <path d="M7.500 8v4M7.500 10.500h1.500" />
        </Icon>
        <span className="pt-px">文档已保护</span>
      </button>
      <span className="ml-3 h-6 w-px bg-[#d6d6d6]" />
      <div className="ml-auto flex items-center pr-4">
        <button type="button" aria-label="全屏" className="mr-[10px]">
          <Icon>
            <path d="M1.500 5V1.500h4M10.500 1.500h4V5M14.500 10.500v4h-4M5.500 14.500h-4v-4M9.500 6.500l5-5M1.500 14.500l5-5" />
          </Icon>
        </button>
        <button type="button" aria-label="普通视图" className="mr-[10px]">
          <Icon>
            <path d="M.5 1.500h15v13H.5zM.5 5.500h15M.5 10.500h15M5.500 1.500v13M10.500 1.500v13" />
          </Icon>
        </button>
        <button type="button" aria-label="分页预览" className="mr-[9px]">
          <Icon>
            <path d="M.5 6V1.500H8M10.500 1v14M15.500 1v5M0 9.500h8M12 9.500h4M15.500 11v3.500H12M.5 12v2.500H8M10.500 1.500H13" />
          </Icon>
        </button>
        <button type="button" aria-label="阅读模式" className="mr-[8px] flex items-center gap-0.5">
          <Icon>
            <path d="M4.500 4.500V1.500q0-1 1-1h5q1 0 1 1v13q0 1-1 1h-5q-1 0-1-1v-4M1.500 4.500h13q1 0 1 1v4q0 1-1 1h-13q-1 0-1-1v-4q0-1 1-1zM4.500 4.500v6M11.500 4.500v6" />
          </Icon>
          <Caret className="text-[#bdbdbd]" />
        </button>
        <button type="button" aria-label="护眼模式" className="mr-3 text-[#484848]">
          <Icon w={17} h={16}>
            <path d="M.5 10q8-9 16 0-8 10-16 0zM8.500 0v3.500M2.500 1.500L5 4.500M14.500 1.500L12 4.500" />
            <circle cx="8.500" cy="10" r="3.500" />
            <circle cx="8.500" cy="10" r="1" />
          </Icon>
        </button>
        <span className="h-6 w-px bg-[#d6d6d6]" />
        <button type="button" className="mr-[11px] ml-[10px] flex items-center gap-1 text-[#b3b3b3]">
          100%
          <Caret className="text-[#bdbdbd]" />
        </button>
        <button type="button" aria-label="缩小">
          <Icon w={12} h={12}>
            <path d="M0 6h12" strokeWidth="2" />
          </Icon>
        </button>
        <input
          type="range"
          aria-label="显示比例"
          defaultValue={50}
          className="mx-[11px] h-[13px] w-[138px] appearance-none bg-transparent [&::-webkit-slider-runnable-track]:h-px [&::-webkit-slider-runnable-track]:bg-[linear-gradient(to_right,#5a5a5a_50%,#b8b8b8_50%)] [&::-webkit-slider-thumb]:-mt-1.5 [&::-webkit-slider-thumb]:h-[13px] [&::-webkit-slider-thumb]:w-[13px] [&::-webkit-slider-thumb]:appearance-none [&::-webkit-slider-thumb]:rounded-full [&::-webkit-slider-thumb]:border [&::-webkit-slider-thumb]:border-[#3a3a3a] [&::-webkit-slider-thumb]:bg-[#e8e8e8]"
        />
        <button type="button" aria-label="放大">
          <Icon w={12} h={12}>
            <path d="M0 6h12M6 0v12" strokeWidth="2" />
          </Icon>
        </button>
      </div>
    </footer>
  );
}

function Check({ label, checked }: { label: string; checked?: boolean }) {
  return (
    <label className="flex items-center gap-[5px] whitespace-nowrap">
      <span className="grid h-[13px] w-[13px] place-items-center">
        <input type="checkbox" defaultChecked={checked} className="peer col-start-1 row-start-1 h-[13px] w-[13px] appearance-none border border-[#333] bg-white" />
        <Icon w={9} h={8} className="pointer-events-none invisible col-start-1 row-start-1 text-[#333] peer-checked:visible">
          <path d="M.5 4l2.500 2.500L8.500 1" strokeWidth="1.200" />
        </Icon>
      </span>
      {label}
    </label>
  );
}

const DIALOG_BUTTON = "h-[30px] w-[77px] bg-[#e1e1e1]";

function Wizard() {
  return (
    <div
      role="dialog"
      aria-label="文本分列向导"
      className="absolute top-[260px] left-[427px] z-20 flex h-[464px] w-[530px] flex-col border border-[#6b6b6b] bg-[#f0f0f0] text-[12px] leading-4 text-black"
    >
      <div className="flex h-[25px] shrink-0 items-center bg-white pr-[10px] pl-[3px]">
        <svg width="16" height="16" viewBox="0 0 16 16" aria-hidden="true">
          <rect width="16" height="16" rx="3" fill="#1db954" />
          <path d="M12.500 4.500H5q-1.500 0-1.500 1.500T5 7.700h6q1.500 0 1.500 1.800T11 11.300H3.500" fill="none" stroke="#fff" strokeWidth="1.500" />
        </svg>
        <span className="ml-[5px] flex-1">文本分列向导 - 3 步骤之 2</span>
        <button type="button" aria-label="关闭">
          <Icon w={11} h={11}>
            <path d="M.5.500l10 10M10.500.5l-10 10" />
          </Icon>
        </button>
      </div>
      <div className="flex min-h-0 flex-1 flex-col px-[6px] pt-[7px] pb-[7px]">
        <p className="pl-[3px]">请设置分列数据所包含的分隔符号。在预览窗口内可以看到分列的效果。</p>
        <div className="mt-[7px] flex gap-1.5 pl-[3px]">
          <fieldset className="h-20 w-[244px] border border-[#dcdcdc] pl-[7px]">
            <legend className="px-0.5 leading-4">分隔符号</legend>
            <div className="grid grid-cols-[78px_78px_1fr] pt-1.5">
              <div className="flex h-[25px] items-center"><Check label="Tab键(T)" /></div>
              <div className="flex h-[25px] items-center"><Check label="分号(M)" /></div>
              <div className="flex h-[25px] items-center"><Check label="逗号(C)" /></div>
              <div className="flex h-[25px] items-center"><Check label="空格(S)" checked /></div>
              <div className="col-span-2 flex h-[25px] items-center gap-3">
                <Check label="其他(O):" />
                <input aria-label="其他分隔符号" className="h-[23px] w-9 border border-[#7a7a7a] bg-white px-1 outline-none" />
              </div>
            </div>
          </fieldset>
          <div className="mt-2 flex-1 border border-[#dcdcdc] pt-[14px] pl-2">
            <div className="flex h-[25px] items-center">
              <Check label="连续分隔符号视为单个处理(R)" checked />
            </div>
            <div className="flex h-[25px] items-center gap-[7px]">
              <label htmlFor="qualifier">文本识别符号(Q):</label>
              <span className="grid h-[23px] w-[84px] items-center">
                <select id="qualifier" className="col-start-1 row-start-1 h-[23px] w-full appearance-none border border-[#adadad] bg-[#e1e1e1] px-[3px] outline-none">
                  <option>"</option>
                  <option>'</option>
                </select>
                <Icon w={9} h={5} className="pointer-events-none col-start-1 row-start-1 mr-[5px] justify-self-end">
                  <path d="M0 0h8L4 4.500z" fill="currentColor" stroke="none" />
                </Icon>
              </span>
            </div>
          </div>
        </div>
        <fieldset className="mt-auto border border-[#dcdcdc] px-[9px] pb-[3px]">
          <legend className="pt-px leading-4">数据预览</legend>
          <div className="-mt-px flex h-[158px] items-start border border-[#82878f] bg-white pt-px pl-1">
            <span className="w-[49px] border-r border-black pt-px leading-[18px]">六年级</span>
            <span className="w-10 border-r border-black pt-px pl-1 leading-[18px]">1班</span>
          </div>
        </fieldset>
        <div className="mt-1 flex justify-end gap-2 pr-px">
          <button type="button" className={`${DIALOG_BUTTON} border border-[#adadad]`}>取消</button>
          <button type="button" className={`${DIALOG_BUTTON} border border-[#adadad]`}>&lt;上一步(B)</button>
          <button type="button" className={`${DIALOG_BUTTON} border-2 border-[#0078d7]`}>下一步(N)&gt;</button>
          <button type="button" className={`${DIALOG_BUTTON} border border-[#adadad]`}>完成(F)</button>
        </div>
      </div>
      <span className="pointer-events-none absolute top-[96px] left-[6px] h-[35px] w-[72px] border-[3px] border-[#f80404] drop-shadow-[2px_2px_2px_rgba(0,0,0,0.5)]" />
      <span className="pointer-events-none absolute top-[404px] left-[333px] h-[59px] w-[110px] border-[3px] border-[#f80404] drop-shadow-[2px_2px_2px_rgba(0,0,0,0.5)]" />
      <svg
        width="90"
        height="60"
        viewBox="0 0 90 60"
        className="pointer-events-none absolute top-[212px] left-[111px] drop-shadow-[2px_2px_2px_rgba(0,0,0,0.5)]"
        aria-hidden="true"
      >
        <path d="M7 54l14-19 2 8L81 8l1.500 2.500L25 46.500l5 3z" fill="#f80404" stroke="#f80404" strokeWidth="1" />
      </svg>
    </div>
  );
}

function Watermark() {
  return (
    <div className="pointer-events-none absolute right-[11px] bottom-[6px] z-30 flex items-start opacity-80">
      <svg width="44" height="42" viewBox="0 0 44 42" aria-hidden="true">
        <defs>
          <linearGradient id="wave" x1="0" y1="1" x2="1" y2="0">
            <stop offset="0" stopColor="#2f6fc4" />
            <stop offset="1" stopColor="#4db8e8" />
          </linearGradient>
          <linearGradient id="leaf" x1="0" y1="1" x2="1" y2="0">
            <stop offset="0" stopColor="#e8d62e" />
            <stop offset="1" stopColor="#35a853" />
          </linearGradient>
        </defs>
        <path d="M43 1Q27 0 14 8 0 17 0 27q0 6 8 7-5-6 2-15Q20 6 43 1z" fill="url(#wave)" />
        <path d="M30 7Q14 11 8 21q-4 7 1 12 4 2 9 0 5-2 5-6 0-3-4-3 2 4-3 5-5 0-4-5 2-9 18-17z" fill="url(#wave)" />
        <path d="M26 12q16 0 16 9 0 8-12 14-9 5-26 5 6-1 8-3 10 1 16-5 5-5 5-11 0-7-7-9z" fill="url(#leaf)" />
      </svg>
      <div className="flex flex-col items-start font-bold">
        <span className="text-[21px] leading-6 text-[#3f86cc]">极光下载站</span>
        <span className="font-['Liberation_Sans',sans-serif] text-[16px] leading-5 text-[#3fb56a]">www.xz7.com</span>
      </div>
    </div>
  );
}

export default function App() {
  return (
    <div className="relative flex h-screen flex-col overflow-hidden bg-[#d8d8d8] font-['Noto_Sans','Noto_Sans_CJK_SC',sans-serif]">
      <TitleBar />
      <MenuBar />
      <Ribbon />
      <main className="flex min-h-0 flex-1">
        <div className="flex min-w-0 flex-1 flex-col">
          <FormulaBar />
          <Sheet />
          <SheetBar />
        </div>
        <SelectionPane />
        <SideRail />
      </main>
      <StatusBar />
      <Wizard />
      <Watermark />
    </div>
  );
}
